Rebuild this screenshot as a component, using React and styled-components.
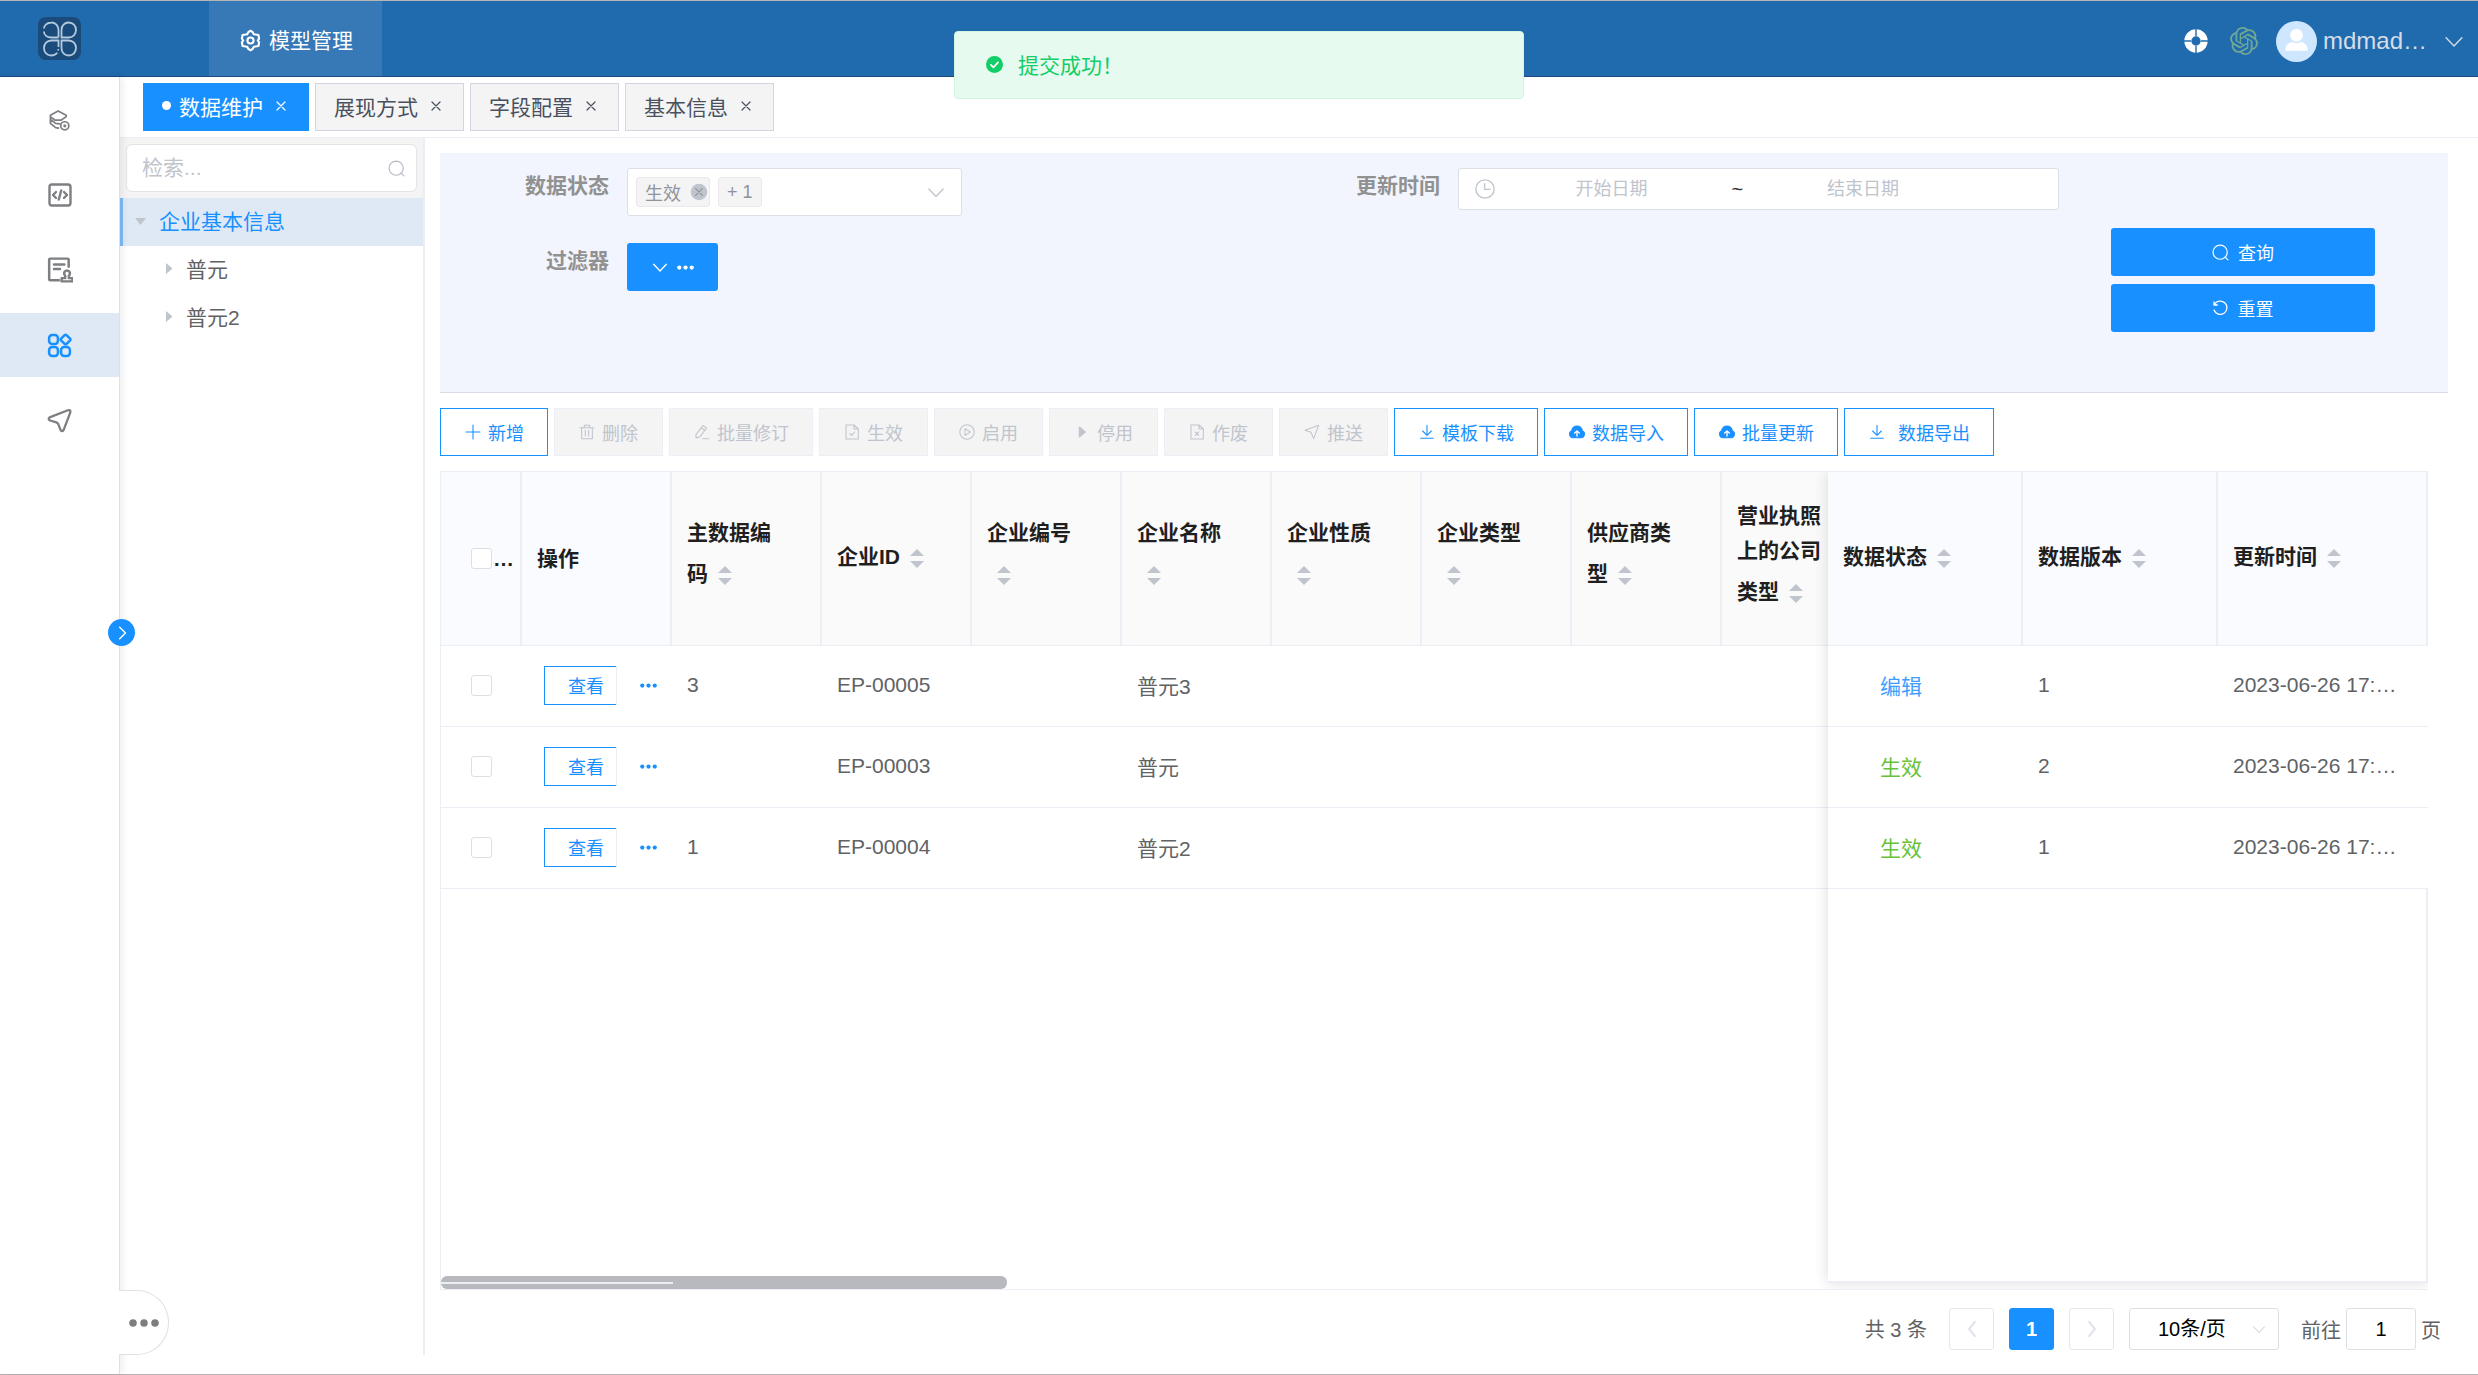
import React from 'react';
import styled, { createGlobalStyle, css } from 'styled-components';
import { SiOpenai } from 'react-icons/si';

const GlobalStyle = createGlobalStyle`
  * {
    box-sizing: border-box;
  }

  body {
    margin: 0;
    background: #fff;
    color: #606266;
    font-family: "Liberation Sans", "Noto Sans CJK SC", sans-serif;
    font-size: 21px;
  }

  button, input, select {
    margin: 0;
    font-family: inherit;
  }

  button {
    cursor: pointer;
  }
`;

const Page = styled.div`
  display: flex;
  flex-direction: column;
  min-height: 100vh;
  border-top: 1px solid #b5b5b5;
  border-bottom: 1px solid #b9b2b4;
`;

/* ---------- header ---------- */

const Header = styled.header`
  display: flex;
  align-items: center;
  height: 76px;
  padding-right: 14px;
  background: #206bae;
  border-bottom: 1px solid #1f4780;
`;

const Logo = styled.div`
  display: flex;
  align-items: center;
  justify-content: center;
  width: 43px;
  height: 43px;
  margin-left: 38px;
  border-radius: 8px;
  background: #1b4b7a;
`;

const NavItem = styled.a`
  display: flex;
  align-items: center;
  align-self: stretch;
  gap: 7px;
  margin-left: 128px;
  padding: 4px 29px 0 30px;
  background: #3779b7;
  color: #fff;
  line-height: 32px;
  text-decoration: none;
`;

const HeaderTools = styled.div`
  display: flex;
  align-items: center;
  gap: 22px;
  margin-left: auto;
  padding-top: 5px;
`;

const ToolButton = styled.button`
  display: flex;
  padding: 0;
  border: 0;
  background: none;
  color: ${({ $color }) => $color || '#fff'};
`;

const UserButton = styled.button`
  display: flex;
  align-items: center;
  gap: 6px;
  margin-left: -4px;
  padding: 0;
  border: 0;
  background: none;
  color: #d6dde6;
  font-size: 24px;
  line-height: 36px;
`;

const UserName = styled.span`
  padding-right: 11px;
`;

const Message = styled.div`
  position: fixed;
  top: 31px;
  left: 50%;
  z-index: 20;
  display: flex;
  align-items: center;
  gap: 15px;
  width: 570px;
  height: 68px;
  padding: 0 31px 2px;
  transform: translateX(-50%);
  border: 1px solid #d0f5e0;
  border-radius: 4px;
  background: #e7faf0;
  color: #13ce66;
`;

/* ---------- side menu ---------- */

const Body = styled.div`
  display: flex;
  flex: 1;
`;

const Sidebar = styled.nav`
  position: relative;
  z-index: 5;
  flex: none;
  width: 120px;
  padding-top: 11px;
  border-right: 1px solid #dfe0e4;
  background: #fff;
  box-shadow: 2px 0 8px rgba(0, 0, 0, 0.08);
`;

const SideItem = styled.a`
  display: flex;
  align-items: center;
  justify-content: center;
  height: 64px;
  margin-bottom: 11px;
  background: ${({ $active }) => ($active ? '#dee9f5' : 'transparent')};
  color: ${({ $active }) => ($active ? '#1890ff' : '#7d7f82')};
`;

const CollapseButton = styled.button`
  position: absolute;
  top: 542px;
  right: -16px;
  display: flex;
  align-items: center;
  justify-content: center;
  width: 27px;
  height: 27px;
  padding: 0;
  border: 0;
  border-radius: 50%;
  background: #1890ff;
  color: #fff;
`;

const MoreButton = styled.button`
  position: absolute;
  bottom: 19px;
  left: 119px;
  display: flex;
  align-items: center;
  justify-content: center;
  width: 50px;
  height: 65px;
  padding: 0;
  border: 1px solid #dfe0e8;
  border-left: 0;
  border-radius: 0 32px 32px 0;
  background: #fff;
  color: #7d7d7d;
`;

/* ---------- tabs ---------- */

const Main = styled.main`
  display: flex;
  flex: 1;
  flex-direction: column;
  min-width: 0;
`;

const Tabs = styled.div`
  display: flex;
  gap: 6px;
  padding: 6px 23px;
  border-bottom: 1px solid #ebeef5;
`;

const Tab = styled.button`
  display: flex;
  align-items: center;
  height: 48px;
  padding: 0 22px 3px 18px;
  border: 1px solid #d3d6e0;
  background: #f4f4f4;
  color: #495060;
  font-size: 21px;

  ${({ $active }) =>
    $active &&
    css`
      border-color: #1890ff;
      background: #1890ff;
      color: #fff;
    `}

  svg {
    margin-left: 13px;
  }
`;

const TabDot = styled.span`
  width: 9px;
  height: 9px;
  margin-right: 8px;
  border-radius: 50%;
  background: #fff;
`;

/* ---------- tree ---------- */

const Columns = styled.div`
  display: flex;
  flex: 1;
`;

const TreePanel = styled.aside`
  flex: none;
  width: 305px;
  margin-bottom: 19px;
  border-right: 2px solid #ebeef5;
`;

const SearchBar = styled.div`
  padding: 6px;
  background: #f4f4f4;
`;

const SearchBox = styled.label`
  display: flex;
  align-items: center;
  height: 48px;
  padding: 0 11px 0 15px;
  border: 1px solid #e2e4ea;
  border-radius: 6px;
  background: #fff;
  color: #b4bac6;
`;

const SearchInput = styled.input`
  flex: 1;
  min-width: 0;
  padding: 0;
  border: 0;
  outline: 0;
  background: none;
  font-size: 21px;

  &::placeholder {
    color: #c0c4cc;
  }
`;

const TreeNode = styled.button`
  display: flex;
  align-items: center;
  gap: ${({ $child }) => ($child ? 11 : 12)}px;
  width: 100%;
  height: 48px;
  padding: 0 0 4px ${({ $child }) => ($child ? 40 : 12)}px;
  border: 0;
  border-left: 3px solid transparent;
  background: none;
  color: #606266;
  font-size: 21px;

  ${({ $active }) =>
    $active &&
    css`
      border-left-color: #7fbcf8;
      background: #dee9f5;
      color: #1890ff;
    `}

  svg {
    color: #c0c4cc;
  }
`;

/* ---------- filters ---------- */

const Content = styled.section`
  display: flex;
  flex: 1;
  flex-direction: column;
  gap: 15px;
  min-width: 0;
  padding: 15px 30px 24px 15px;
`;

const FilterPanel = styled.form`
  display: grid;
  grid-template-columns: minmax(0, 12fr) minmax(0, 12fr) minmax(0, 5fr);
  min-height: 240px;
  padding-top: 15px;
  border-bottom: 1px solid #d9dce6;
  background: #f2f5fd;
`;

const Field = styled.div`
  display: flex;
  align-items: flex-start;
  margin-bottom: 27px;
`;

const FieldLabel = styled.label`
  flex: none;
  width: 169px;
  margin-right: 18px;
  color: #919191;
  font-size: 21px;
  font-weight: 700;
  line-height: 36px;
  text-align: right;
`;

const MultiSelect = styled.button`
  display: flex;
  align-items: center;
  gap: 8px;
  width: 335px;
  height: 48px;
  padding: 0 16px 0 8px;
  border: 1px solid #dcdfe6;
  border-radius: 3px;
  background: #fff;
  color: #c0c4cc;

  > svg {
    margin-left: auto;
  }
`;

const Tag = styled.span`
  display: flex;
  align-items: center;
  gap: 9px;
  height: 30px;
  padding: 0 ${({ $closable }) => ($closable ? 1 : 8)}px 0 8px;
  border: 1px solid #e9e9eb;
  border-radius: 3px;
  background: #f4f4f5;
  color: #909399;
  font-size: 18px;
`;

const FilterButton = styled.button`
  display: flex;
  align-items: center;
  justify-content: center;
  gap: 9px;
  width: 91px;
  height: 48px;
  padding: 0;
  border: 0;
  border-radius: 3px;
  background: #1890ff;
  color: #fff;
`;

const DateRange = styled.div`
  display: flex;
  flex: 1;
  align-items: center;
  gap: 6px;
  min-width: 0;
  height: 42px;
  margin-right: 43px;
  padding: 0 84px 0 16px;
  border: 1px solid #dcdfe6;
  border-radius: 3px;
  background: #fff;
  color: #c0c4cc;
`;

const DateInput = styled.input`
  flex: 1;
  min-width: 0;
  padding: 0;
  border: 0;
  outline: 0;
  background: none;
  font-size: 18px;
  text-align: center;

  &::placeholder {
    color: #c0c4cc;
  }
`;

const DateDivider = styled.span`
  width: 18px;
  color: #303133;
  font-size: 20px;
  text-align: center;
`;

const Actions = styled.div`
  display: flex;
  flex-direction: column;
  gap: 8px;
  padding: 60px 73px 0 9px;
`;

const ActionButton = styled.button`
  display: flex;
  align-items: center;
  justify-content: center;
  gap: 9px;
  height: 48px;
  border: 0;
  border-radius: 3px;
  background: #1890ff;
  color: #fff;
  font-size: 18px;
`;

/* ---------- toolbar ---------- */

const Toolbar = styled.div`
  display: flex;
  gap: 6px;
`;

const ToolbarButton = styled.button`
  display: flex;
  align-items: center;
  gap: ${({ $wide }) => ($wide ? 13 : 7)}px;
  height: 48px;
  padding: 0 23px 0 24px;
  border: 1px solid #1890ff;
  background: #fff;
  color: #1890ff;
  font-size: 18px;
  white-space: nowrap;

  &:disabled {
    min-width: 109px;
    border-color: #ebeef5;
    background: #f4f4f4;
    color: #c0c4cc;
    cursor: not-allowed;
  }
`;

/* ---------- table ---------- */

const TableFrame = styled.div`
  display: flex;
  flex: 1;
  margin-right: 20px;
  overflow: hidden;
  border: 1px solid #ebeef5;
  border-right: 0;
`;

const ScrollPane = styled.div`
  display: flex;
  flex: 1;
  flex-direction: column;
  min-width: 0;
  overflow: hidden;
`;

const FixedPane = styled.div`
  position: relative;
  display: flex;
  flex: none;
  flex-direction: column;
  width: 600px;
  margin-bottom: 6px;
  background: #fff;
  box-shadow: 0 0 14px rgba(0, 0, 0, 0.14);
`;

const FixedFiller = styled.div`
  flex: 1;
  border-right: 2px solid #ebeef5;
  border-bottom: 2px solid #ebeef5;
`;

const ScrollThumb = styled.div`
  display: flex;
  align-items: center;
  width: 40.8%;
  height: 13px;
  margin-top: auto;
  border-radius: 6px;
  background: #b7b9bf;

  &::before {
    content: "";
    width: 41%;
    height: 2px;
    background: #ebeef5;
  }
`;

const Table = styled.table`
  width: ${({ $width }) => $width}px;
  table-layout: fixed;
  border-collapse: separate;
  border-spacing: 0;
`;

const Th = styled.th`
  height: 174px;
  padding: 0 33px 1px 15px;
  border-right: 2px solid #ebeef5;
  border-bottom: 1px solid #ebeef5;
  background: ${({ $fixed }) => ($fixed ? '#f9fbff' : '#fafafa')};
  color: #1f1f1f;
  font-weight: 700;
  line-height: 35px;
  text-align: left;
`;

const Td = styled.td`
  height: 81px;
  padding: 0 15px 2px;
  border-bottom: 1px solid #ebeef5;
  white-space: nowrap;
`;

const CheckCell = styled.div`
  display: flex;
  align-items: center;
  gap: 1px;
  margin-left: 15px;
`;

const Checkbox = styled.input`
  flex: none;
  width: 21px;
  height: 21px;
  margin: 0;
  appearance: none;
  border: 1px solid #dcdfe6;
  border-radius: 3px;
  background: #fff;
`;

const SortIcon = styled.span`
  display: inline-flex;
  align-items: center;
  justify-content: center;
  width: 34px;
  height: 51px;
  vertical-align: middle;
  color: #c0c4cc;
`;

const RowActions = styled.div`
  display: flex;
  align-items: center;
  gap: 23px;
  margin-left: 7px;
`;

/* the button is wider than its slot, the slot cuts its right side */
const ViewSlot = styled.div`
  flex: none;
  width: 73px;
  overflow: hidden;
  border-right: 1px solid #ebeef5;
`;

const ViewButton = styled.button`
  display: block;
  width: 84px;
  height: 39px;
  padding: 0;
  border: 1px solid #1890ff;
  background: #fff;
  color: #1890ff;
  font-size: 18px;
`;

const Status = styled.span`
  margin-left: 37px;
  color: ${({ $type }) => ($type === 'edit' ? '#409eff' : '#67c23a')};
`;

/* ---------- pagination ---------- */

const Pagination = styled.div`
  display: flex;
  align-items: center;
  justify-content: flex-end;
  gap: 15px;
  margin-top: 3px;
  padding-right: 7px;
  font-size: 20px;
`;

const Total = styled.span`
  padding: 0 7px 2px 0;
`;

const PageButton = styled.button`
  display: flex;
  align-items: center;
  justify-content: center;
  width: 45px;
  height: 42px;
  padding: 0;
  border: 1px solid ${({ $active }) => ($active ? '#1890ff' : '#e4e7ed')};
  border-radius: 3px;
  background: ${({ $active }) => ($active ? '#1890ff' : '#fff')};
  color: ${({ $active }) => ($active ? '#fff' : '#dfe3ea')};
  font-size: 20px;
  font-weight: 700;
`;

const SizeBox = styled.div`
  display: flex;
  align-items: center;
  width: 150px;
  height: 42px;
  padding-right: 12px;
  border: 1px solid #dcdfe6;
  border-radius: 3px;
  color: #c0c4cc;
`;

const SizeSelect = styled.select`
  flex: 1;
  min-width: 0;
  height: 40px;
  padding: 0 0 0 28px;
  border: 0;
  outline: 0;
  appearance: none;
  background: none;
  color: #000;
  font-size: 20px;
`;

const Jump = styled.label`
  display: flex;
  align-items: center;
  gap: 5px;
  padding-left: 7px;
`;

const JumpInput = styled.input`
  width: 70px;
  height: 42px;
  padding: 0;
  border: 1px solid #dcdfe6;
  border-radius: 3px;
  color: #000;
  font-size: 20px;
  text-align: center;
`;

/* ---------- icons ---------- */

const Icon = ({ size = 18, width = 1.6, box = 24, children }) => (
  <svg
    width={size}
    height={size}
    viewBox={`0 0 ${box} ${box}`}
    fill="none"
    stroke="currentColor"
    strokeWidth={width}
    strokeLinecap="round"
    strokeLinejoin="round"
    aria-hidden="true"
  >
    {children}
  </svg>
);

const CloverLogo = () => (
  <svg width="36" height="36" viewBox="0 0 36 36" fill="none" stroke="#b3c9de" strokeWidth="1.8" aria-hidden="true">
    <path d="M16.5 16.5V9.5A6.8 7.5 0 0 0 9.5 1.5C5 1.5 2 4.5 2 7.5M2 10.5C2 14 5 16.5 9.5 16.5H16.5" />
    <path d="M19.5 16.5V9A7.2 7.2 0 0 1 26.8 1.5A7.3 7.3 0 0 1 34 9A7.3 7.3 0 0 1 26.8 16.5Z" />
    <path d="M16.5 26V19.5H9.2A7.3 7.3 0 0 0 2 27A7.2 7.2 0 0 0 9.2 34.5C12 34.5 14 33.5 15.2 31.8M16.3 29.5V28" />
    <path d="M19.5 19.5H26.8A7.3 7.3 0 0 1 34 27A7.3 7.3 0 0 1 26.8 34.5A7.2 7.2 0 0 1 19.5 27Z" />
  </svg>
);

const GearIcon = () => (
  <Icon size={23} width={2.2}>
    <path d="M9.5 3.6L12 1.8L14.5 3.6L15.4 5.4L20.3 6.2L21 10L19.6 12L21 14L20.3 17.8L15.4 18.6L14.5 20.4L12 22.2L9.5 20.4L8.6 18.6L3.7 17.8L3 14L4.4 12L3 10L3.7 6.2L8.6 5.4Z" />
    <circle cx="12" cy="12" r="3.2" />
  </Icon>
);

const LifeRing = () => (
  <Icon size={24} width={7}>
    <circle cx="12" cy="12" r="8.2" />
    <path d="M12 0V7M12 17V24M0 12H7M17 12H24" stroke="#206bae" strokeWidth="1.4" strokeLinecap="butt" />
  </Icon>
);

const Avatar = () => (
  <svg width="41" height="41" viewBox="0 0 40 40" aria-hidden="true">
    <circle cx="20" cy="20" r="20" fill="#cfe6ff" />
    <circle cx="20" cy="14" r="6.2" fill="#fff" />
    <path d="M9 29C9 24 12 21 15.5 20.5C18 22 22 22 24.5 20.5C28 21 31 24 31 29Z" fill="#fff" />
  </svg>
);

const ChevronDown = ({ size = 18, width = 1.6 }) => (
  <Icon size={size} width={width}>
    <path d="M2.5 8L12 18L21.5 8" />
  </Icon>
);

const Dots = ({ size = 17 }) => (
  <svg width={size} height={size} viewBox="0 0 24 24" fill="currentColor" aria-hidden="true">
    <circle cx="3.2" cy="12" r="3" />
    <circle cx="12" cy="12" r="3" />
    <circle cx="20.8" cy="12" r="3" />
  </svg>
);

const SuccessIcon = () => (
  <Icon size={17} width={2.4}>
    <circle cx="12" cy="12" r="12" fill="#13ce66" stroke="none" />
    <path d="M7 12.5L10.5 16L17 9" stroke="#fff" />
  </Icon>
);

const SearchIcon = () => (
  <Icon size={17} width={1.7}>
    <circle cx="11.5" cy="11.5" r="10" />
    <path d="M18.5 18.5L22.5 22.5" />
  </Icon>
);

const ResetIcon = () => (
  <Icon size={16} width={1.9}>
    <path d="M3 3V7.5H8M3.5 7A10 10 0 1 1 3 15" />
  </Icon>
);

const ClockIcon = () => (
  <Icon size={20} width={1.6}>
    <circle cx="12" cy="12" r="11" />
    <path d="M11.5 5.5V12.5H18" />
  </Icon>
);

const TagClose = () => (
  <Icon size={18} width={1.6}>
    <circle cx="12" cy="12" r="11" fill="#c0c4cc" stroke="none" />
    <path d="M7.5 7.5L16.5 16.5M16.5 7.5L7.5 16.5" stroke="#909399" />
  </Icon>
);

const CloseIcon = () => (
  <Icon size={10} width={1.2} box={10}>
    <path d="M1 1L9 9M9 1L1 9" />
  </Icon>
);

const Triangle = ({ open }) => (
  <svg width="12" height="12" viewBox="0 0 12 12" fill="currentColor" aria-hidden="true">
    <path d={open ? 'M0 4H11L5.5 11Z' : 'M3 1V12L9.5 6.5Z'} />
  </svg>
);

const Sort = () => (
  <SortIcon>
    <svg width="14" height="19" viewBox="0 0 14 19" fill="currentColor" aria-hidden="true">
      <path d="M7 0L14 7H0Z" />
      <path d="M7 19L14 12H0Z" />
    </svg>
  </SortIcon>
);

const LayersIcon = () => (
  <Icon size={23} width={1.8}>
    <path d="M10.5 2L19 6.5V8L14 11.5H7L2.5 8V6.5ZM2.5 11L8 15L12.5 15.5M2.5 15L8 19.5L11 20M2.5 8V15" />
    <circle cx="17.5" cy="17.5" r="4.2" />
    <circle cx="17.5" cy="17.5" r="0.8" />
  </Icon>
);

const CodeIcon = () => (
  <Icon size={24} width={2.4}>
    <rect x="1.5" y="1.5" width="21" height="21" rx="2.5" />
    <path d="M8 9L5 12L8 15M16 9L19 12L16 15M13.2 7.5L10.8 16.5" />
  </Icon>
);

const DocUserIcon = () => (
  <Icon size={26} width={2.3}>
    <path d="M20 9V2.5Q20 1.5 19 1.5H3Q2 1.5 2 2.5V20.5Q2 21.5 3 21.5H11M6.5 7H16M6.5 11H12" />
    <path d="M16.8 17.5C15 15 16 12.5 18.5 12.5S22 15 20.2 17.5V19.5H23.5V22.5H13.5V19.5H16.8Z" />
  </Icon>
);

const AppsIcon = () => (
  <Icon size={25} width={2.4}>
    <rect x="2" y="2" width="8.5" height="8.5" rx="3" />
    <rect x="2" y="13.5" width="8.5" height="8.5" rx="3" />
    <rect x="13.5" y="13.5" width="8.5" height="8.5" rx="3" />
    <path d="M16.7 2.2Q17.8 1.2 18.9 2.2L22 5.2Q23 6.2 22 7.3L18.9 10.3Q17.8 11.3 16.7 10.3L13.7 7.3Q12.7 6.2 13.7 5.2Z" />
  </Icon>
);

const PlaneIcon = () => (
  <Icon size={25} width={2.2}>
    <path d="M2.5 9L20 2.2Q23.2 1.2 22.3 4.5L16 21Q14.5 23.5 13 21L10.8 15.5Q10.3 14.3 9 13.8L3 12Q0.5 10.5 2.5 9Z" />
  </Icon>
);

const toolIcons = {
  plus: <path d="M12 1.5V22.5M1.5 12H22.5" />,
  trash: <path d="M1.5 5.5H22.5M4 5.5V22H20V5.5M8 5V2H16V5M9.5 9.5V18M14.5 9.5V18" />,
  edit: <path d="M3 16L13.5 2.5L19 6L9 19L3 21ZM11 6L16.5 9.8M13 22H22" />,
  fileCheck: <path d="M3 1.5H15L21.5 7.5V22.5H3ZM15 1.5V7.5H21.5M8.5 14L11.5 17L16 12" />,
  playCircle: (
    <>
      <circle cx="12" cy="12" r="10.8" />
      <path d="M9 7L17 12L9 17Z" />
    </>
  ),
  play: <path d="M8 4.5V19.5L17 12Z" fill="currentColor" />,
  fileX: <path d="M3 1.5H15L21.5 7.5V22.5H3ZM15 1.5V7.5H21.5M9.5 12L14.5 17M14.5 12L9.5 17" />,
  send: <path d="M1.5 9.5L22 2L14.5 22L10.5 12.5Z" />,
  download: <path d="M12 2V17M5.5 10.5L12 17L18.5 10.5M2.5 21.5H21.5" />,
  upload: (
    <>
      <path
        d="M6 20.5A5.5 5.5 0 0 1 4 10C5 5.5 8 3 12 3S19 5.5 20 10A5.5 5.5 0 0 1 18 20.5Z"
        fill="currentColor"
      />
      <path d="M12 18V11M8.5 13.5L12 10.5L15.5 13.5" stroke="#fff" strokeWidth="2" />
    </>
  ),
};

/* ---------- data ---------- */

const sideItems = [
  { name: '模型', icon: <LayersIcon /> },
  { name: '代码', icon: <CodeIcon /> },
  { name: '审批', icon: <DocUserIcon /> },
  { name: '应用', icon: <AppsIcon />, active: true },
  { name: '分发', icon: <PlaneIcon /> },
];

const tabs = ['数据维护', '展现方式', '字段配置', '基本信息'];

const tools = [
  { label: '新增', icon: 'plus' },
  { label: '删除', icon: 'trash', disabled: true },
  { label: '批量修订', icon: 'edit', disabled: true },
  { label: '生效', icon: 'fileCheck', disabled: true },
  { label: '启用', icon: 'playCircle', disabled: true },
  { label: '停用', icon: 'play', disabled: true },
  { label: '作废', icon: 'fileX', disabled: true },
  { label: '推送', icon: 'send', disabled: true },
  { label: '模板下载', icon: 'download' },
  { label: '数据导入', icon: 'upload' },
  { label: '批量更新', icon: 'upload' },
  { label: '数据导出', icon: 'download', wide: true },
];

const columns = [
  '主数据编码',
  '企业ID',
  '企业编号',
  '企业名称',
  '企业性质',
  '企业类型',
  '供应商类型',
  '营业执照上的公司类型',
];

const fixedColumns = ['数据状态', '数据版本', '更新时间'];

const rows = [
  { code: '3', id: 'EP-00005', name: '普元3', status: '编辑', type: 'edit', version: '1', time: '2023-06-26 17:…' },
  { code: '', id: 'EP-00003', name: '普元', status: '生效', type: 'valid', version: '2', time: '2023-06-26 17:…' },
  { code: '1', id: 'EP-00004', name: '普元2', status: '生效', type: 'valid', version: '1', time: '2023-06-26 17:…' },
];

/* ---------- sections ---------- */

const Filters = () => (
  <FilterPanel onSubmit={(e) => e.preventDefault()}>
    <div>
      <Field>
        <FieldLabel htmlFor="status">数据状态</FieldLabel>
        <MultiSelect type="button" id="status">
          <Tag $closable>
            生效
            <TagClose />
          </Tag>
          <Tag>+ 1</Tag>
          <ChevronDown size={18} />
        </MultiSelect>
      </Field>
      <Field>
        <FieldLabel htmlFor="filter">过滤器</FieldLabel>
        <FilterButton type="button" id="filter">
          <ChevronDown size={16} width={2} />
          <Dots />
        </FilterButton>
      </Field>
    </div>
    <Field>
      <FieldLabel htmlFor="start">更新时间</FieldLabel>
      <DateRange>
        <ClockIcon />
        <DateInput id="start" placeholder="开始日期" />
        <DateDivider>~</DateDivider>
        <DateInput aria-label="结束日期" placeholder="结束日期" />
      </DateRange>
    </Field>
    <Actions>
      <ActionButton type="submit">
        <SearchIcon />
        查询
      </ActionButton>
      <ActionButton type="reset">
        <ResetIcon />
        重置
      </ActionButton>
    </Actions>
  </FilterPanel>
);

const DataTable = () => (
  <TableFrame>
    <ScrollPane>
      <Table $width={1431}>
        <colgroup>
          <col style={{ width: 81 }} />
          <col />
          {columns.map((name) => (
            <col key={name} />
          ))}
        </colgroup>
        <thead>
          <tr>
            <Th $fixed>
              <CheckCell>
                <Checkbox type="checkbox" aria-label="全选" />…
              </CheckCell>
            </Th>
            <Th $fixed>操作</Th>
            {columns.map((name) => (
              <Th key={name}>
                {name}
                <Sort />
              </Th>
            ))}
          </tr>
        </thead>
        <tbody>
          {rows.map((row) => (
            <tr key={row.id}>
              <Td>
                <CheckCell>
                  <Checkbox type="checkbox" aria-label={row.id} />
                </CheckCell>
              </Td>
              <Td>
                <RowActions>
                  <ViewSlot>
                    <ViewButton type="button">查看</ViewButton>
                  </ViewSlot>
                  <ToolButton type="button" $color="#1890ff" aria-label="更多">
                    <Dots />
                  </ToolButton>
                </RowActions>
              </Td>
              <Td>{row.code}</Td>
              <Td>{row.id}</Td>
              <Td />
              <Td>{row.name}</Td>
              <Td colSpan={4} />
            </tr>
          ))}
        </tbody>
      </Table>
      <ScrollThumb />
    </ScrollPane>
    <FixedPane>
      <Table $width={600}>
        <colgroup>
          <col style={{ width: 195 }} />
          <col style={{ width: 195 }} />
          <col />
        </colgroup>
        <thead>
          <tr>
            {fixedColumns.map((name) => (
              <Th key={name} $fixed>
                {name}
                <Sort />
              </Th>
            ))}
          </tr>
        </thead>
        <tbody>
          {rows.map((row) => (
            <tr key={row.id}>
              <Td>
                <Status $type={row.type}>{row.status}</Status>
              </Td>
              <Td>{row.version}</Td>
              <Td>{row.time}</Td>
            </tr>
          ))}
        </tbody>
      </Table>
      <FixedFiller />
    </FixedPane>
  </TableFrame>
);

const Pager = () => (
  <Pagination>
    <Total>共 3 条</Total>
    <PageButton type="button" aria-label="上一页">
      <Icon size={20} width={2.4}>
        <path d="M15.5 3.5L8.5 12L15.5 20.5" />
      </Icon>
    </PageButton>
    <PageButton type="button" $active>
      1
    </PageButton>
    <PageButton type="button" aria-label="下一页">
      <Icon size={20} width={2.4}>
        <path d="M8.5 3.5L15.5 12L8.5 20.5" />
      </Icon>
    </PageButton>
    <SizeBox>
      <SizeSelect aria-label="每页条数" defaultValue="10">
        <option value="10">10条/页</option>
      </SizeSelect>
      <ChevronDown size={14} />
    </SizeBox>
    <Jump>
      前往
      <JumpInput defaultValue="1" />
      页
    </Jump>
  </Pagination>
);

const App = () => {
  return (
    <>
      <GlobalStyle />
      <Page>
        <Header>
          <Logo>
            <CloverLogo />
          </Logo>
          <NavItem href="#model">
            <GearIcon />
            模型管理
          </NavItem>
          <HeaderTools>
            <ToolButton type="button" aria-label="帮助">
              <LifeRing />
            </ToolButton>
            <ToolButton type="button" aria-label="AI" $color="#6fa795">
              <SiOpenai size={28} />
            </ToolButton>
            <UserButton type="button">
              <Avatar />
              <UserName>mdmad…</UserName>
              <ChevronDown size={20} />
            </UserButton>
          </HeaderTools>
        </Header>
        <Message role="alert">
          <SuccessIcon />
          提交成功！
        </Message>
        <Body>
          <Sidebar>
            {sideItems.map((item) => (
              <SideItem key={item.name} href="#" aria-label={item.name} $active={item.active}>
                {item.icon}
              </SideItem>
            ))}
            <CollapseButton type="button" aria-label="展开">
              <Icon size={14} width={2.4}>
                <path d="M8 2L18 12L8 22" />
              </Icon>
            </CollapseButton>
            <MoreButton type="button" aria-label="更多">
              <Dots size={30} />
            </MoreButton>
          </Sidebar>
          <Main>
            <Tabs>
              {tabs.map((name, i) => (
                <Tab key={name} type="button" $active={i === 0}>
                  {i === 0 && <TabDot />}
                  {name}
                  <CloseIcon />
                </Tab>
              ))}
            </Tabs>
            <Columns>
              <TreePanel>
                <SearchBar>
                  <SearchBox>
                    <SearchInput placeholder="检索..." aria-label="检索" />
                    <SearchIcon />
                  </SearchBox>
                </SearchBar>
                <TreeNode type="button" $active>
                  <Triangle open />
                  企业基本信息
                </TreeNode>
                <TreeNode type="button" $child>
                  <Triangle />
                  普元
                </TreeNode>
                <TreeNode type="button" $child>
                  <Triangle />
                  普元2
                </TreeNode>
              </TreePanel>
              <Content>
                <Filters />
                <Toolbar>
                  {tools.map((tool) => (
                    <ToolbarButton key={tool.label} type="button" disabled={tool.disabled} $wide={tool.wide}>
                      <Icon size={16}>{toolIcons[tool.icon]}</Icon>
                      {tool.label}
                    </ToolbarButton>
                  ))}
                </Toolbar>
                <DataTable />
                <Pager />
              </Content>
            </Columns>
          </Main>
        </Body>
      </Page>
    </>
  );
};

export default App;
